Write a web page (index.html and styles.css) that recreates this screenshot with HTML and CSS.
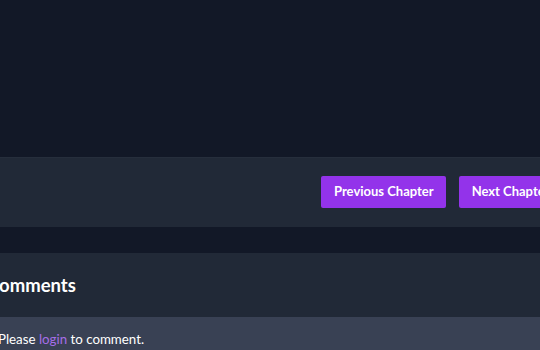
FILE: index.html
```html
<!DOCTYPE html>
<html lang="en">

<head>
    <meta charset="UTF-8">
    <meta name="viewport" content="width=device-width, initial-scale=1.0">
    <title>Chapter</title>
    <link rel="stylesheet" href="styles.css">
</head>

<body>
    <div class="page">
        <div class="reader"></div>

        <nav class="chapter-nav">
            <a class="btn" href="#">Previous Chapter</a>
            <a class="btn" href="#">Next Chapter</a>
        </nav>

        <section class="comments">
            <h2 class="comments-title">Comments</h2>
            <div class="comments-body">
                <p>Please <a href="#">login</a> to comment.</p>
            </div>
        </section>
    </div>
</body>

</html>
```

FILE: styles.css
```css
* {
    margin: 0;
    padding: 0;
    box-sizing: border-box;
}

body {
    background-color: #121827;
    font-family: Lato, "Open Sans", sans-serif;
    color: #fff;
    overflow: hidden;
}

.page {
    width: 760px;
    margin-left: -14px;
}

.reader {
    height: 157px;
}

.chapter-nav {
    display: flex;
    gap: 13px;
    height: 70px;
    padding: 0 0 1px 335px;
    align-items: center;
    background-color: #212937;
    border-top: 1px solid #262e3c;
}

.btn {
    display: block;
    height: 32px;
    padding: 0 12px 0 13px;
    line-height: 31px;
    white-space: nowrap;
    background-color: #9333ea;
    color: #fff;
    font-size: 13px;
    font-weight: 700;
    text-decoration: none;
    border-radius: 2px;
}

.comments {
    margin-top: 26px;
}

.comments-title {
    height: 64px;
    padding: 18px 0 0 1px;
    font-size: 18.5px;
    line-height: 28px;
    font-weight: 700;
    background-color: #212937;
}

.comments-body {
    background-color: #394154;
    padding: 12px 12px;
    font-size: 13.3px;
    line-height: 20px;
}

.comments-body a {
    color: #a66ee8;
    text-decoration: none;
}
```
